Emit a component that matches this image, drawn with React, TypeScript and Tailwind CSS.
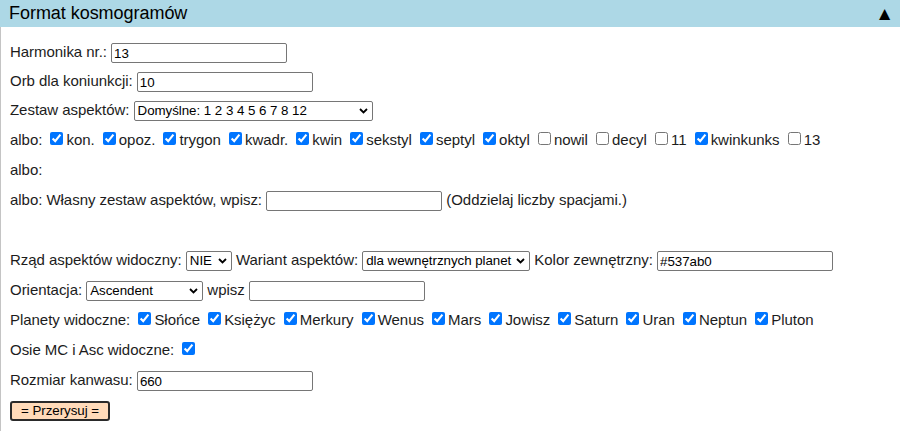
import type { ReactNode } from "react";

const aspects: [string, boolean][] = [
  ["kon.", true],
  ["opoz.", true],
  ["trygon", true],
  ["kwadr.", true],
  ["kwin", true],
  ["sekstyl", true],
  ["septyl", true],
  ["oktyl", true],
  ["nowil", false],
  ["decyl", false],
  ["11", false],
  ["kwinkunks", true],
  ["13", false],
];

const planets = ["Słońce", "Księżyc", "Merkury", "Wenus", "Mars", "Jowisz", "Saturn", "Uran", "Neptun", "Pluton"];

function TextInput({ value = "" }: { value?: string }) {
  return (
    <input
      type="text"
      defaultValue={value}
      className="h-[20px] w-[176px] rounded-[2px] border border-[#767676] bg-white px-[2px] align-middle text-[13.33px] leading-[16px] text-black outline-none"
    />
  );
}

function Select({ className, children }: { className: string; children: ReactNode }) {
  return (
    <span className={`relative inline-block align-middle ${className}`}>
      <select className="block h-[20px] w-full appearance-none rounded-[2px] border border-[#767676] bg-white pl-[3px] pr-[16px] text-[13.33px] leading-[16px] text-black outline-none">
        <option>{children}</option>
      </select>
      <svg
        className="pointer-events-none absolute right-[5px] top-[7px]"
        width="9"
        height="6"
        viewBox="0 0 9 6"
      >
        <path d="M1 1l3.5 3.5L8 1" stroke="#000" strokeWidth="1.8" fill="none" />
      </svg>
    </span>
  );
}

function Check({ checked }: { checked: boolean }) {
  return <input type="checkbox" defaultChecked={checked} className="m-[3px_3px_3px_4px] h-[13px] w-[13px]" />;
}

function Row({ children, tall = true }: { children?: ReactNode; tall?: boolean }) {
  return (
    <div className={`${tall ? "h-[30px] leading-[30px]" : "h-[29px] leading-[29px]"} whitespace-nowrap pl-[9px]`}>
      {children}
    </div>
  );
}

export default function App() {
  return (
    <div className="flex min-h-screen flex-col bg-white font-['Liberation_Sans',Arial,sans-serif] text-[15px] tracking-[-0.04px] text-[#1c1c1c]">
      <div className="flex h-[27px] items-center justify-between bg-[#add8e6] pl-[9px] pr-[6px]">
        <span className="text-[18px] text-black">Format kosmogramów</span>
        <span className="text-[19px] leading-none text-black">▲</span>
      </div>

      <div className="flex-1 border-l border-[#c4c4c4] pt-[10px]">
        <Row tall={false}>
          Harmonika nr.: <TextInput value="13" />
        </Row>
        <Row tall={false}>
          Orb dla koniunkcji: <TextInput value="10" />
        </Row>
        <Row>
          Zestaw aspektów: <Select className="w-[239px]">Domyślne: 1 2 3 4 5 6 7 8 12</Select>
        </Row>
        <Row>
          albo:{" "}
          {aspects.map(([name, on]) => (
            <span key={name}>
              <Check checked={on} />
              {name}{" "}
            </span>
          ))}
        </Row>
        <Row>albo:</Row>
        <Row>
          albo: Własny zestaw aspektów, wpisz: <TextInput /> (Oddzielaj liczby spacjami.)
        </Row>
        <Row />
        <Row>
          Rząd aspektów widoczny: <Select className="w-[46px]">NIE</Select> Wariant aspektów:{" "}
          <Select className="w-[168px]">dla wewnętrznych planet</Select> Kolor zewnętrzny: <TextInput value="#537ab0" />
        </Row>
        <Row>
          Orientacja: <Select className="w-[117px]">Ascendent</Select> wpisz <TextInput />
        </Row>
        <Row>
          Planety widoczne:{" "}
          {planets.map((p) => (
            <span key={p}>
              <Check checked />
              {p}{" "}
            </span>
          ))}
        </Row>
        <Row>
          Osie MC i Asc widoczne: <Check checked />
        </Row>
        <Row>
          Rozmiar kanwasu: <TextInput value="660" />
        </Row>
        <Row>
          <button
            type="button"
            className="h-[20px] rounded-[3px] border-2 border-[#2a2a2a] bg-[#ffdab9] px-[9px] align-middle text-[13.33px] leading-[14px] text-black"
          >
            = Przerysuj =
          </button>
        </Row>
      </div>
    </div>
  );
}
